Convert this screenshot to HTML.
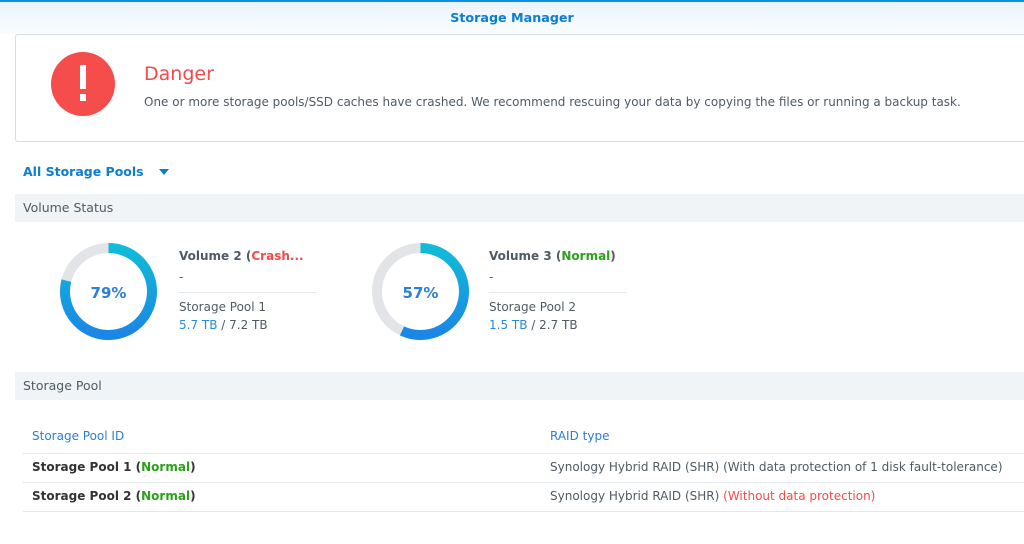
<!DOCTYPE html>
<html><head><meta charset="utf-8"><style>
*{margin:0;padding:0;box-sizing:border-box}
body{width:1024px;height:544px;overflow:hidden;background:#fff;font-family:"DejaVu Sans",sans-serif;color:#505a64;font-size:12px;position:relative}
.abs{position:absolute;white-space:nowrap}
.hdr{position:absolute;left:0;top:0;width:1024px;height:34px;border-top:2px solid #0a8ee8;background:linear-gradient(#eaf4fd,#fafdff)}
.title{left:0;width:1024px;text-align:center;top:10px;color:#0a7ed3;font-weight:bold;font-size:12.7px}
.box{position:absolute;left:15px;top:34px;width:1020px;height:108px;border:1px solid #d7dde3;border-radius:3px;background:#fff}
.bar{position:absolute;left:15px;width:1009px;height:28px;background:#f1f4f7;padding-left:8px;line-height:28px;font-size:12.5px;color:#505a64}
.blue{color:#2a8ae0}.red{color:#f54a4a}.green{color:#2ca01c}
.b{font-weight:bold}
.line{position:absolute;height:1px;background:#e3e7eb}
</style></head><body>
<div class="hdr"></div>
<div class="abs title">Storage Manager</div>
<div class="box"></div>
<svg class="abs" style="left:51px;top:52px" width="64" height="64"><circle cx="32" cy="32" r="32" fill="#f54c4c"/><rect x="29" y="13" width="6" height="24" fill="#fff"/><rect x="29" y="42" width="6" height="7" fill="#fff"/></svg>
<div class="abs red" style="left:144px;top:63px;font-size:19px">Danger</div>
<div class="abs" style="left:144px;top:95px">One or more storage pools/SSD caches have crashed. We recommend rescuing your data by copying the files or running a backup task.</div>
<div class="abs b" style="left:23px;top:164px;font-size:12.5px;color:#0a7ed3">All Storage Pools</div>
<svg class="abs" style="left:158px;top:168px" width="12" height="8"><path d="M1 1h10L6 7z" fill="#0a7ed3"/></svg>
<div class="bar" style="top:194px">Volume Status</div>
<svg class="abs" style="left:60px;top:243px" width="97" height="97">
<defs><linearGradient id="g" gradientUnits="userSpaceOnUse" x1="0" y1="5" x2="0" y2="92"><stop offset="0" stop-color="#10bbd8"/><stop offset="1" stop-color="#1a86e6"/></linearGradient></defs>
<circle cx="48.5" cy="48.5" r="43.5" fill="none" stroke="#e2e4e8" stroke-width="10"/>
<path d="M48.5 5A43.5 43.5 0 1 1 6.37 37.68" fill="none" stroke="url(#g)" stroke-width="10"/>
<text x="48.5" y="55" text-anchor="middle" font-family="DejaVu Sans" font-weight="bold" font-size="15" fill="#2a7fd6">79%</text></svg>
<svg class="abs" style="left:372px;top:243px" width="97" height="97">
<circle cx="48.5" cy="48.5" r="43.5" fill="none" stroke="#e2e4e8" stroke-width="10"/>
<path d="M48.5 5A43.5 43.5 0 1 1 29.98 87.86" fill="none" stroke="url(#g)" stroke-width="10"/>
<text x="48.5" y="55" text-anchor="middle" font-family="DejaVu Sans" font-weight="bold" font-size="15" fill="#2a7fd6">57%</text></svg>
<div class="abs b" style="left:179px;top:249px">Volume 2 (<span class="red">Crash...</span></div>
<div class="abs" style="left:179px;top:270px">-</div>
<div class="line" style="left:179px;top:292px;width:137px"></div>
<div class="abs" style="left:179px;top:300px">Storage Pool 1</div>
<div class="abs" style="left:179px;top:318px"><span class="blue">5.7 TB</span> / 7.2 TB</div>
<div class="abs b" style="left:489px;top:249px">Volume 3 (<span class="green">Normal</span>)</div>
<div class="abs" style="left:489px;top:270px">-</div>
<div class="line" style="left:489px;top:292px;width:137px"></div>
<div class="abs" style="left:489px;top:300px">Storage Pool 2</div>
<div class="abs" style="left:489px;top:318px"><span class="blue">1.5 TB</span> / 2.7 TB</div>
<div class="bar" style="top:372px">Storage Pool</div>
<div class="abs blue" style="left:32px;top:429px;color:#2a7fd6">Storage Pool ID</div>
<div class="abs blue" style="left:550px;top:429px;color:#2a7fd6">RAID type</div>
<div class="line" style="left:23px;top:453px;width:1001px"></div>
<div class="abs b" style="left:32px;top:460px;color:#333">Storage Pool 1 (<span class="green">Normal</span>)</div>
<div class="abs" style="left:550px;top:460px">Synology Hybrid RAID (SHR) (With data protection of 1 disk fault-tolerance)</div>
<div class="line" style="left:23px;top:482px;width:1001px"></div>
<div class="abs b" style="left:32px;top:489px;color:#333">Storage Pool 2 (<span class="green">Normal</span>)</div>
<div class="abs" style="left:550px;top:489px">Synology Hybrid RAID (SHR) <span class="red">(Without data protection)</span></div>
<div class="line" style="left:23px;top:511px;width:1001px"></div>
</body></html>
